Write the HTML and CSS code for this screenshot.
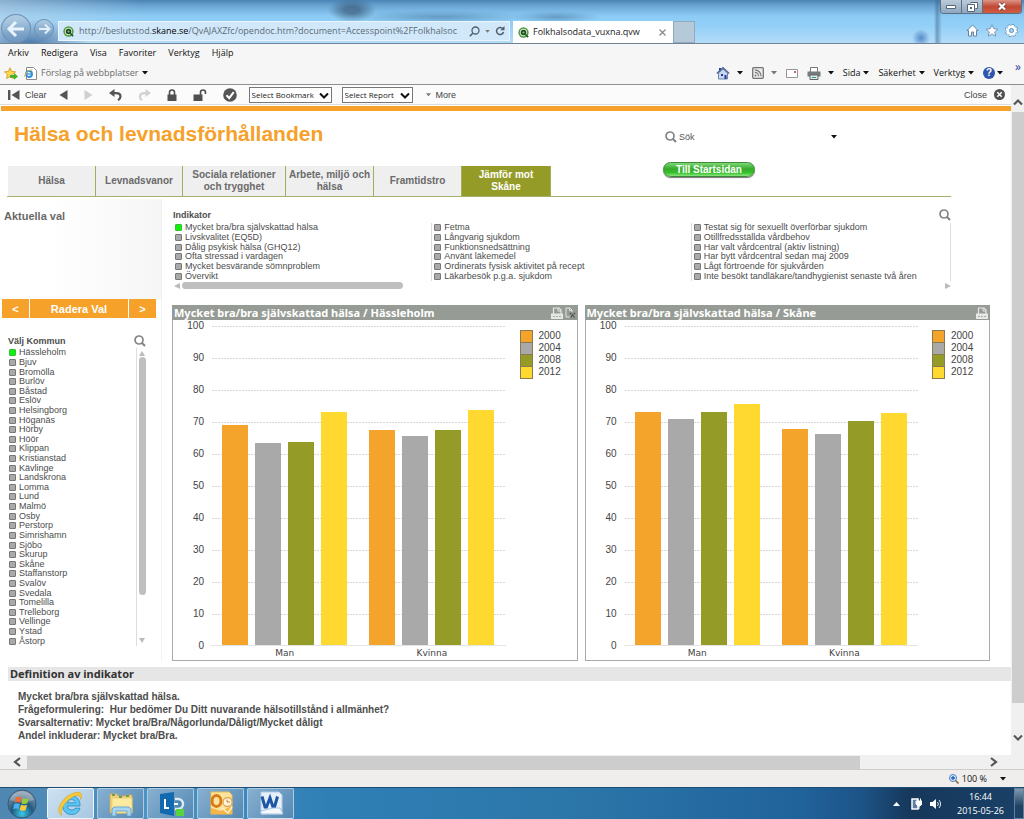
FILE: index.html
```html
<!DOCTYPE html>
<html lang="sv">
<head>
<meta charset="utf-8">
<title>Folkhalsodata_vuxna.qvw</title>
<link rel="stylesheet" href="styles.css">
</head>
<body>
<svg class="defs" width="0" height="0" aria-hidden="true">
  <defs>
    <symbol id="qlik" viewBox="0 0 12 12"><circle cx="6" cy="6" r="5.6" fill="#4d9b3c"/><circle cx="6" cy="6" r="4" fill="#d8ecd0"/><circle cx="6" cy="6" r="3" fill="#27432b"/><circle cx="6" cy="6" r="1.2" fill="#7fc96a"/><path d="M8 8l3 3" stroke="#27632b" stroke-width="2"/></symbol>
    <symbol id="mag" viewBox="0 0 12 12"><circle cx="5" cy="5" r="4" fill="none" stroke="#858585" stroke-width="1.7"/><path d="M7.8 7.8L11 11" stroke="#858585" stroke-width="2.2"/></symbol>
    <symbol id="down" viewBox="0 0 6 4"><path d="M0 0h6L3 3.6z" fill="currentColor"/></symbol>
    <symbol id="chev" viewBox="0 0 10 8"><path d="M1 1.5l4 4 4-4" fill="none" stroke="currentColor" stroke-width="2"/></symbol>
    <symbol id="printer" viewBox="0 0 12 12"><path d="M2.5 7V1h5.500l2 2v4" fill="none" stroke="#e6e8e5" stroke-width="1.2"/><path d="M7 1v3h3" fill="none" stroke="#e6e8e5"/><path d="M0 6.500h12V12H0z" fill="#e6e8e5"/><path d="M2 9.500h8" stroke="#a5aaa3" stroke-dasharray="2 1"/></symbol>
  </defs>
</svg>

<header class="titlebar">
  <div class="nav-buttons">
    <button class="round back" aria-label="Bakåt"><svg width="20" height="18" viewBox="0 0 20 18"><path d="M10 2L3 9l7 7M3 9h15" fill="none" stroke="#e9f3fb" stroke-width="3"/></svg></button>
    <button class="round forward" aria-label="Framåt"><svg width="13" height="12" viewBox="0 0 13 12"><path d="M7 1.500l4.500 4.500L7 10.500M11 6H1" fill="none" stroke="#e2eff9" stroke-width="2"/></svg></button>
  </div>
  <div class="address">
    <svg width="11" height="11"><use href="#qlik"/></svg>
    <div class="url" role="textbox" contenteditable="true" aria-label="Adress">http://beslutstod.<b>skane.se</b>/QvAJAXZfc/opendoc.htm?document=Accesspoint%2FFolkhalsoc</div>
    <svg width="11" height="11" viewBox="0 0 11 11"><circle cx="6.500" cy="4.500" r="3.500" fill="none" stroke="#51606c" stroke-width="1.300"/><path d="M4 7L.8 10.200" stroke="#51606c" stroke-width="1.600"/></svg>
    <svg class="muted" width="5" height="3"><use href="#down"/></svg>
    <svg width="10" height="10" viewBox="0 0 10 10"><path d="M8 2.800A3.600 3.600 0 1 0 8.600 6" fill="none" stroke="#51606c" stroke-width="1.500"/><path d="M9.500 0v4.200H5.300z" fill="#51606c"/></svg>
  </div>
  <div class="tab-strip">
    <div class="browser-tab"><svg width="11" height="11"><use href="#qlik"/></svg><span>Folkhalsodata_vuxna.qvw</span><button aria-label="Stäng flik"><svg width="7" height="7" viewBox="0 0 7 7"><path d="M.5.5l6 6M6.500.5l-6 6" stroke="#8b8b8b" stroke-width="1.300"/></svg></button></div>
    <button class="new-tab" aria-label="Ny flik"></button>
  </div>
  <div class="window-side">
    <div class="window-buttons">
      <button aria-label="Minimera"><svg width="10" height="4" viewBox="0 0 10 4"><path d="M.5.5h9v3h-9z" fill="#fff" stroke="#54677d"/></svg></button>
      <button aria-label="Återställ"><svg width="11" height="10" viewBox="0 0 11 10"><path d="M3.500.5h7v6h-2" fill="#fff" stroke="#54677d"/><path d="M.5 2.500h7v7h-7z" fill="#fff" stroke="#54677d"/><path d="M3 5h2v2H3z" fill="#54677d"/></svg></button>
      <button class="close" aria-label="Stäng"><svg width="10" height="9" viewBox="0 0 10 9"><path d="M2 1.500l6 6M8 1.500l-6 6" stroke="#6b3833" stroke-width="3.600"/><path d="M2 1.500l6 6M8 1.500l-6 6" stroke="#fff" stroke-width="2.200"/></svg></button>
    </div>
    <div class="tools">
      <button aria-label="Startsida"><svg width="13" height="13" viewBox="0 0 13 13"><path d="M1 6.500L6.500 1 12 6.500h-1.500V12h-3V8h-2v4h-3V6.500z" fill="#fff" stroke="#6883a0"/></svg></button>
      <button aria-label="Favoriter"><svg width="14" height="13" viewBox="0 0 13 13"><path d="M6.500.8l1.700 3.900 4.200.4-3.200 2.800 1 4.200-3.700-2.200-3.700 2.200 1-4.200L.6 5.100l4.200-.4z" fill="#fff" stroke="#6883a0" stroke-width=".8"/></svg></button>
      <button aria-label="Verktyg"><svg width="13" height="13" viewBox="0 0 13 13"><circle cx="6.500" cy="6.500" r="5" fill="none" stroke="#6883a0" stroke-width="3" stroke-dasharray="2.300 1.600"/><circle cx="6.500" cy="6.500" r="3.600" fill="none" stroke="#fff" stroke-width="2.200"/><circle cx="6.500" cy="6.500" r="5" fill="none" stroke="#fff" stroke-width="1.600" stroke-dasharray="2 1.900"/><circle cx="6.500" cy="6.500" r="2" fill="none" stroke="#6883a0" stroke-width=".8"/></svg></button>
    </div>
  </div>
</header>

<nav class="menu-bar">
  <button>Arkiv</button><button>Redigera</button><button>Visa</button><button>Favoriter</button><button>Verktyg</button><button>Hjälp</button>
</nav>
<div class="command-bar">
  <button class="add-fav" aria-label="Lägg till i favoriter"><svg width="14" height="13" viewBox="0 0 14 13"><path d="M6 .8l1.600 3.600 4 .5-3 2.600.8 4L6 9.600l-3.400 1.900.8-4L.5 4.900l4-.5z" fill="#ffd84d" stroke="#d79b1d" stroke-width=".9"/><path d="M6 8h4V6l4 3.500-4 3.300v-2H6z" fill="#43b02a"/></svg></button>
  <button class="suggested"><svg width="13" height="13" viewBox="0 0 13 13"><path d="M2.500.5h7l3 3v9h-10z" fill="#fff" stroke="#8a8a8a"/><circle cx="5" cy="7" r="3" fill="none" stroke="#2c8fd6" stroke-width="1.900"/><path d="M2.500 7H8" stroke="#2c8fd6" stroke-width="1.300"/><path d="M.5 10C1 6 5 2.500 8.500 3" fill="none" stroke="#e5b93b"/></svg>Förslag på webbplatser<svg class="black" width="6" height="4"><use href="#down"/></svg></button>
  <div class="commands">
    <button aria-label="Startsida"><svg width="14" height="14" viewBox="0 0 14 14"><path d="M3 2h2v4H3z" fill="#29369b"/><path d="M2.500 7v6h9V7L7 3z" fill="#c7d7ef" stroke="#6f86ae"/><path d="M.8 7.500L7 1.800l6.200 5.700" fill="none" stroke="#526b9c" stroke-width="1.500"/><path d="M5 8h2v2H5zM8.500 9h2v4h-2z" fill="#26399c"/></svg><svg width="6" height="4"><use href="#down"/></svg></button>
    <button aria-label="Flöden"><svg width="12" height="12" viewBox="0 0 12 12"><rect x=".7" y=".7" width="10.600" height="10.600" rx="1" fill="#ececec" stroke="#737373" stroke-width="1.300"/><circle cx="3.500" cy="8.500" r="1" fill="#777"/><path d="M2.800 5.400a3.800 3.800 0 0 1 3.800 3.800M2.800 2.900a6.300 6.300 0 0 1 6.300 6.300" fill="none" stroke="#777" stroke-width="1.200"/></svg><svg class="muted" width="6" height="4"><use href="#down"/></svg></button>
    <button aria-label="E-post"><svg width="12" height="9" viewBox="0 0 12 9"><path d="M.5.5h11v8H.5z" fill="#fff" stroke="#9a9494"/><path d="M8 2h2v2H8z" fill="#c96464"/></svg></button>
    <button aria-label="Skriv ut"><svg width="14" height="13" viewBox="0 0 14 13"><path d="M3.500 5V.5h7V5" fill="#fff" stroke="#777"/><path d="M.5 4.500h13v5H.5z" fill="#777b7b"/><path d="M3 8h8v4.500H3z" fill="#dce9e7" stroke="#666"/><path d="M5 10.500h4" stroke="#3b9b94"/></svg><svg width="6" height="4"><use href="#down"/></svg></button>
    <button>Sida<svg width="6" height="4"><use href="#down"/></svg></button>
    <button>Säkerhet<svg width="6" height="4"><use href="#down"/></svg></button>
    <button>Verktyg<svg width="6" height="4"><use href="#down"/></svg></button>
    <button class="help" aria-label="Hjälp"><span>?</span><svg width="6" height="4"><use href="#down"/></svg></button>
    <button class="overflow" aria-label="Fler kommandon">»</button>
  </div>
</div>

<div class="viewport">
  <div class="page">
    <div class="qv-bar">
      <button class="q-clear"><svg width="12" height="10" viewBox="0 0 12 10"><path d="M0 0h2.400v10H0zM11.500 0v10L3.500 5z" fill="#555"/></svg>Clear</button>
      <button aria-label="Back"><svg width="9" height="10" viewBox="0 0 9 10"><path d="M8.500 0v10L.5 5z" fill="#555"/></svg></button>
      <button aria-label="Forward"><svg width="9" height="10" viewBox="0 0 9 10"><path d="M.5 0v10l8-5z" fill="#cfcfcf"/></svg></button>
      <button aria-label="Undo"><svg width="13" height="12" viewBox="0 0 13 12"><path d="M3 4.200h4.500c5 0 5 5 1.500 7" fill="none" stroke="#555" stroke-width="2.200"/><path d="M5.500 0v8L0 4z" fill="#555"/></svg></button>
      <button aria-label="Redo"><svg width="13" height="12" viewBox="0 0 13 12"><path d="M10 4.200H6c-5 0-5 5-2 7" fill="none" stroke="#d2d2d2" stroke-width="2.200"/><path d="M7.500 0v8L13 4z" fill="#d2d2d2"/></svg></button>
      <button aria-label="Lock"><svg width="10" height="12" viewBox="0 0 10 12"><path d="M.5 5.500h9V12h-9z" fill="#4f4f4f"/><path d="M2.500 6V3.500a2.500 2.500 0 0 1 5 0V6" fill="none" stroke="#4f4f4f" stroke-width="1.600"/></svg></button>
      <button aria-label="Unlock"><svg width="14" height="12" viewBox="0 0 14 12"><path d="M.5 5.500h9V12h-9z" fill="#4f4f4f"/><path d="M7.500 6V3.500a2.500 2.500 0 0 1 5 0V5" fill="none" stroke="#4f4f4f" stroke-width="1.600"/></svg></button>
      <button aria-label="Apply"><svg width="14" height="14" viewBox="0 0 14 14"><circle cx="7" cy="7" r="6.800" fill="#555"/><path d="M3.500 7.200l2.700 2.900 4.500-6" fill="none" stroke="#fff" stroke-width="2"/></svg></button>
      <label class="pick bookmark"><select aria-label="Select Bookmark"><option>Select Bookmark</option></select><svg width="10" height="8"><use href="#chev"/></svg></label>
      <label class="pick report"><select aria-label="Select Report"><option>Select Report</option></select><svg width="10" height="8"><use href="#chev"/></svg></label>
      <button class="q-more"><svg class="muted" width="5" height="4"><use href="#down"/></svg>More</button>
      <button class="q-close">Close<svg width="11" height="11" viewBox="0 0 11 11"><circle cx="5.500" cy="5.500" r="5.500" fill="#505050"/><path d="M3.300 3.300l4.400 4.400M7.700 3.300L3.300 7.700" stroke="#fff" stroke-width="1.600"/></svg></button>
    </div>
    <div class="stripe"></div>

    <div class="page-head">
      <div class="head-left">
        <h1>Hälsa och levnadsförhållanden</h1>
        <nav class="tabs">
          <a href="#halsa">Hälsa</a><a href="#levnad">Levnadsvanor</a><a class="wide" href="#sociala">Sociala relationer och trygghet</a><a href="#arbete">Arbete, miljö och hälsa</a><a href="#framtid">Framtidstro</a><a class="active" href="#jamfor">Jämför mot Skåne</a>
        </nav>
      </div>
      <div class="head-right">
        <label class="search"><svg width="12" height="12"><use href="#mag"/></svg><input type="text" placeholder="Sök" aria-label="Sök"><svg class="black" width="6" height="4"><use href="#down"/></svg></label>
        <button class="start">Till Startsidan</button>
      </div>
    </div>

    <div class="columns">
      <aside class="sidebar">
        <h2>Aktuella val</h2>
        <div class="reset"><button aria-label="Föregående">&lt;</button><button>Radera Val</button><button aria-label="Nästa">&gt;</button></div>
        <div class="list-title"><h3>Välj Kommun</h3><button aria-label="Sök kommun"><svg width="12" height="12"><use href="#mag"/></svg></button></div>
        <div class="kommun">
          <div class="options">
            <label><input type="checkbox" checked>Hässleholm</label><label><input type="checkbox">Bjuv</label><label><input type="checkbox">Bromölla</label><label><input type="checkbox">Burlöv</label><label><input type="checkbox">Båstad</label><label><input type="checkbox">Eslöv</label><label><input type="checkbox">Helsingborg</label><label><input type="checkbox">Höganäs</label><label><input type="checkbox">Hörby</label><label><input type="checkbox">Höör</label><label><input type="checkbox">Klippan</label><label><input type="checkbox">Kristianstad</label><label><input type="checkbox">Kävlinge</label><label><input type="checkbox">Landskrona</label><label><input type="checkbox">Lomma</label><label><input type="checkbox">Lund</label><label><input type="checkbox">Malmö</label><label><input type="checkbox">Osby</label><label><input type="checkbox">Perstorp</label><label><input type="checkbox">Simrishamn</label><label><input type="checkbox">Sjöbo</label><label><input type="checkbox">Skurup</label><label><input type="checkbox">Skåne</label><label><input type="checkbox">Staffanstorp</label><label><input type="checkbox">Svalöv</label><label><input type="checkbox">Svedala</label><label><input type="checkbox">Tomelilla</label><label><input type="checkbox">Trelleborg</label><label><input type="checkbox">Vellinge</label><label><input type="checkbox">Ystad</label><label><input type="checkbox">Åstorp</label>
          </div>
          <div class="v-scroll"><svg width="6" height="5" viewBox="0 0 6 5"><path d="M0 5h6L3 0z" fill="#bbb"/></svg><div class="thumb"></div><svg width="6" height="5" viewBox="0 0 6 5"><path d="M0 0h6L3 5z" fill="#bbb"/></svg></div>
        </div>
      </aside>

      <main>
        <section class="indicator">
          <div class="list-title"><h3>Indikator</h3><button aria-label="Sök indikator"><svg width="12" height="12"><use href="#mag"/></svg></button></div>
          <div class="indicator-cols">
            <div class="options"><label><input type="checkbox" checked>Mycket bra/bra självskattad hälsa</label><label><input type="checkbox">Livskvalitet (EQ5D)</label><label><input type="checkbox">Dålig psykisk hälsa (GHQ12)</label><label><input type="checkbox">Ofta stressad i vardagen</label><label><input type="checkbox">Mycket besvärande sömnproblem</label><label><input type="checkbox">Övervikt</label></div>
            <div class="options"><label><input type="checkbox">Fetma</label><label><input type="checkbox">Långvarig sjukdom</label><label><input type="checkbox">Funktionsnedsättning</label><label><input type="checkbox">Använt läkemedel</label><label><input type="checkbox">Ordinerats fysisk aktivitet på recept</label><label><input type="checkbox">Läkarbesök p.g.a. sjukdom</label></div>
            <div class="options"><label><input type="checkbox">Testat sig för sexuellt överförbar sjukdom</label><label><input type="checkbox">Otillfredsställda vårdbehov</label><label><input type="checkbox">Har valt vårdcentral (aktiv listning)</label><label><input type="checkbox">Har bytt vårdcentral sedan maj 2009</label><label><input type="checkbox">Lågt förtroende för sjukvården</label><label><input type="checkbox">Inte besökt tandläkare/tandhygienist senaste två åren</label></div>
          </div>
          <div class="h-scroll"><svg width="6" height="6" viewBox="0 0 6 6"><path d="M6 0v6L0 3z" fill="#bbb"/></svg><div class="track"><div class="thumb"></div></div><svg width="6" height="6" viewBox="0 0 6 6"><path d="M0 0v6l6-3z" fill="#bbb"/></svg></div>
        </section>

        <div class="charts">
          <section class="chart">
            <header><h3>Mycket bra/bra självskattad hälsa / Hässleholm</h3><button aria-label="Skriv ut"><svg width="12" height="12"><use href="#printer"/></svg></button><button aria-label="Exportera"><svg width="11" height="12" viewBox="0 0 11 12"><path d="M5 10H1V1h4l2 2v2M4.500 1v2.500H7" fill="none" stroke="#dfe2de"/><path d="M5 6l5 5M10 6l-5 5" stroke="#4b504b" stroke-width="1.300" stroke-dasharray="1.500 .7"/></svg></button></header>
            <div class="chart-body">
              <div class="y-axis"><span>100</span><span>90</span><span>80</span><span>70</span><span>60</span><span>50</span><span>40</span><span>30</span><span>20</span><span>10</span><span>0</span></div>
              <div class="plot-col">
                <div class="plot">
                  <div class="group"><i class="c0" style="height:69%"></i><i class="c1" style="height:63.3%"></i><i class="c2" style="height:63.6%"></i><i class="c3" style="height:73%"></i></div>
                  <div class="group"><i class="c0" style="height:67.4%"></i><i class="c1" style="height:65.4%"></i><i class="c2" style="height:67.4%"></i><i class="c3" style="height:73.6%"></i></div>
                </div>
                <div class="x-axis"><span>Man</span><span>Kvinna</span></div>
              </div>
              <ul class="legend"><li><i class="c0"></i>2000</li><li><i class="c1"></i>2004</li><li><i class="c2"></i>2008</li><li><i class="c3"></i>2012</li></ul>
            </div>
          </section>
          <section class="chart">
            <header><h3>Mycket bra/bra självskattad hälsa / Skåne</h3><button aria-label="Skriv ut"><svg width="12" height="12"><use href="#printer"/></svg></button></header>
            <div class="chart-body">
              <div class="y-axis"><span>100</span><span>90</span><span>80</span><span>70</span><span>60</span><span>50</span><span>40</span><span>30</span><span>20</span><span>10</span><span>0</span></div>
              <div class="plot-col">
                <div class="plot">
                  <div class="group"><i class="c0" style="height:73%"></i><i class="c1" style="height:70.9%"></i><i class="c2" style="height:73%"></i><i class="c3" style="height:75.6%"></i></div>
                  <div class="group"><i class="c0" style="height:67.6%"></i><i class="c1" style="height:66.1%"></i><i class="c2" style="height:70.2%"></i><i class="c3" style="height:72.6%"></i></div>
                </div>
                <div class="x-axis"><span>Man</span><span>Kvinna</span></div>
              </div>
              <ul class="legend"><li><i class="c0"></i>2000</li><li><i class="c1"></i>2004</li><li><i class="c2"></i>2008</li><li><i class="c3"></i>2012</li></ul>
            </div>
          </section>
        </div>
      </main>
    </div>

    <section class="definition">
      <h3>Definition av indikator</h3>
      <div class="def-text">
        <p>Mycket bra/bra självskattad hälsa.</p>
        <p>Frågeformulering:&nbsp; Hur bedömer Du Ditt nuvarande hälsotillstånd i allmänhet?</p>
        <p>Svarsalternativ: Mycket bra/Bra/Någorlunda/Dåligt/Mycket dåligt</p>
        <p>Andel inkluderar: Mycket bra/Bra.</p>
      </div>
    </section>

    <div class="page-h-scroll"><svg width="8" height="10" viewBox="0 0 8 10"><path d="M7 1L2 5l5 4" fill="none" stroke="#555" stroke-width="2.200"/></svg><div class="track"><div class="thumb"></div></div><svg width="8" height="10" viewBox="0 0 8 10"><path d="M1 1l5 4-5 4" fill="none" stroke="#555" stroke-width="2.200"/></svg></div>
  </div>
  <div class="page-v-scroll"><svg width="10" height="8" viewBox="0 0 10 8"><path d="M1 6.500l4-4 4 4" fill="none" stroke="#555" stroke-width="2.200"/></svg><div class="thumb"></div><svg width="10" height="8"><use href="#chev"/></svg></div>
</div>

<footer class="status-bar"><button><svg width="10" height="10" viewBox="0 0 10 10"><circle cx="4" cy="4" r="3.500" fill="#d8ebfb" stroke="#3f7fc4"/><path d="M4 2v4M2 4h4" stroke="#1f5fb4" stroke-width="1.300"/><path d="M6.500 6.500l3 3" stroke="#8a6a3a" stroke-width="1.600"/></svg>100 %<svg class="zoom-arrow" width="6" height="4"><use href="#down"/></svg></button></footer>

<div class="taskbar">
  <button class="start-orb" aria-label="Start"><svg width="30" height="30" viewBox="0 0 30 30"><defs><radialGradient id="orb" cx="50%" cy="85%" r="75%"><stop offset="0" stop-color="#3cc8e6"/><stop offset=".5" stop-color="#1f5a80"/><stop offset="1" stop-color="#7f93a5"/></radialGradient></defs><circle cx="15" cy="15" r="14" fill="url(#orb)" stroke="#355a78"/><path d="M3 11a12.500 12.500 0 0 1 24 0c-7 3-17 3-24 0z" fill="#fff" opacity=".25"/><path d="M9 8.500c2-1.200 4-1.100 5.500 0l-1.300 5.200c-1.700-1-3.500-1-5.500 0z" fill="#f06a31"/><path d="M15.700 9.200c2 1 4 1 6-.2l-1.300 5.300c-2 1.100-4 1-6 .1z" fill="#9acb3b"/><path d="M7.300 15c2-1 4-1 5.600 0l-1.300 5.200c-1.800-1-3.700-1-5.600 0z" fill="#4eb0ea"/><path d="M14 15.700c2 1 4 1 6 0l-1.300 5.300c-2 1-4 1-6 0z" fill="#fbcb3d"/></svg></button>
  <button class="task current" aria-label="Internet Explorer"><svg width="28" height="26" viewBox="0 0 28 26"><path d="M23 15H10.500c.3 2.800 2 4 4.300 4 1.700 0 2.800-.6 3.600-1.800H23c-1.400 4.400-4.500 6.300-8.400 6.300-5.300 0-9-3.800-9-9.300S9.500 5 14.700 5c5.300 0 8.600 3.800 8.300 10zM10.600 11.800h7.600c-.3-2-1.700-3.200-3.800-3.200-2 0-3.400 1.200-3.800 3.200z" fill="#5cc4f1" stroke="#2489c6" stroke-width=".8"/><path d="M4.500 24.500C-2.500 20 5 6.500 15.500 2.500c7.500-2.800 11-.3 8 6 .3-4-2.300-5-6.500-3.200C9.500 8.500 2.500 18 4.500 24.500z" fill="#f8ca35" stroke="#d69c18" stroke-width=".5"/></svg></button>
  <button class="task" aria-label="Utforskaren"><svg width="28" height="24" viewBox="0 0 28 24"><path d="M3 2h7l1 2h7l1-1h6v18H3z" fill="#f0d27a" stroke="#d0aa50" stroke-width=".8"/><path d="M5 6h20v15H5z" fill="#fbeaa0" stroke="#e8cf75"/><path d="M5 3h3M12 5h3M19 4h3" stroke="#4d8b50" stroke-width="1.500"/><path d="M5 24v-7l2-2h15l2 2v7h-4v-5H9v5z" fill="#a7d5f0" stroke="#6ba7cf"/></svg></button>
  <button class="task" aria-label="Lync"><svg width="28" height="26" viewBox="0 0 28 26"><path d="M3 3l14-2v24L3 22z" fill="#1169b0"/><path d="M8 8v9h4" fill="none" stroke="#fff" stroke-width="2"/><path d="M18 8h3a5 5 0 0 1 0 10h-3" fill="#4b86b5" stroke="#dceaf5" stroke-width="2.400"/><path d="M17 13h4" stroke="#fff" stroke-width="2"/><path d="M19 18h8v7h-8z" fill="#55d43f"/></svg></button>
  <button class="task" aria-label="Outlook"><svg width="26" height="25" viewBox="0 0 26 25"><path d="M3 1h18l3 3v19H3z" fill="#fbe3a0" stroke="#f3bd55"/><path d="M3 17l10 3 11-5v8H3z" fill="#f6b647"/><ellipse cx="8.500" cy="10" rx="4.500" ry="5.500" fill="none" stroke="#d97c14" stroke-width="3"/><circle cx="19.500" cy="11" r="4.500" fill="#fff5e2" stroke="#e5a551" stroke-width="1.300"/><path d="M19 8.500V11h3" fill="none" stroke="#cf7a16"/><path d="M14 17l6 5 4-6" fill="none" stroke="#fff2d0" stroke-width="1.500"/></svg></button>
  <button class="task" aria-label="Word"><svg width="26" height="25" viewBox="0 0 26 25"><path d="M3 1h18l3 3v19H3z" fill="#e6f0fa" stroke="#b3cce6"/><path d="M4 5.500l3 10.500h1.500L12 7l3 9h1.500l3-10.500" fill="none" stroke="#1f55a5" stroke-width="3"/><path d="M3 20l12-3h7l3 6H3z" fill="#f5f9fd" stroke="#a9c5e1"/></svg></button>
  <div class="tray">
    <svg width="7" height="4" viewBox="0 0 7 4"><path d="M0 4h7L3.500 0z" fill="#fff"/></svg>
    <svg width="11" height="13" viewBox="0 0 11 13"><path d="M1 2h6v10H1z" fill="#5c7e9d" stroke="#fff" stroke-width="1.500"/><path d="M5 4h6v3l-2 2H7L5 7zM8 9v3M6.500 1.500V4M9.500 1.500V4" fill="#fff" stroke="#fff"/></svg>
    <svg width="12" height="12" viewBox="0 0 12 12"><path d="M0 4h2.500L6 1v10L2.500 8H0z" fill="#fff"/><path d="M7.500 4a3 3 0 0 1 0 4M9 2a6 6 0 0 1 0 8" fill="none" stroke="#dfeaf3"/></svg>
    <div class="clock"><time>16:44</time><time>2015-05-26</time></div>
  </div>
  <button class="show-desktop" aria-label="Visa skrivbordet"></button>
</div>
</body>
</html>
```
FILE: styles.css
```css
* { box-sizing: border-box; }
html, body { margin: 0; }
body {
  min-height: 100vh;
  display: flex;
  flex-direction: column;
  background: #fff;
  font-family: "Liberation Sans", Arial, sans-serif;
  font-size: 10px;
  color: #4d4d4d;
}
svg { display: block; flex: none; }
.defs { position: absolute; }
button { margin: 0; padding: 0; border: 0; background: none; font: inherit; color: inherit; display: flex; align-items: center; justify-content: center; }
h1, h2, h3, p, ul { margin: 0; padding: 0; }
i { display: block; }
.black { color: #111; }
.muted { color: #777; }

/* Browser frame */
.titlebar {
  height: 44px;
  display: flex;
  align-items: flex-end;
  border-bottom: 1px solid #6f8494;
  background:
    radial-gradient(ellipse 24px 12px at 352px 10px, #3d5f80bb 30%, transparent),
    radial-gradient(ellipse 90px 7px at 440px 17px, #4f83adaa, transparent),
    radial-gradient(ellipse 44px 6px at 556px 17px, #4f83adaa, transparent),
    radial-gradient(ellipse 9px 9px at 921px 38px, #3f78b8cc, transparent),
    radial-gradient(ellipse 60px 24px at 30px 44px, #4a78aa, transparent),
    linear-gradient(90deg, transparent 934px, #3e668a88 937px, transparent 942px),
    linear-gradient(90deg, #c3d6e688 0, #7bbbe900 14%),
    linear-gradient(#4a83b4, #6ba6d4 6px, #8ccbf5 16px, #93d0f8 26px, #b4dcf8 43px);
}
.nav-buttons { display: flex; align-items: center; gap: 3px; padding: 0 4px 0 1px; }
.round { border-radius: 50%; border: 1px solid #6f8fb0; background: linear-gradient(#b4c8dc99, #8fadcc99 50%, #6f99c4); }
.back { width: 30px; height: 29px; }
.forward { width: 20px; height: 20px; }
.address {
  flex: 1;
  height: 20px;
  min-width: 0;
  margin-bottom: 2px;
  padding: 0 4px;
  display: flex;
  align-items: center;
  gap: 5px;
  border: 1px solid #eaf6ff;
  background: #d0e8fa;
}
.url { flex: 1; min-width: 0; overflow: hidden; white-space: nowrap; font: 9px/18px "Open Sans", sans-serif; color: #5c6b78; }
.url b { font-weight: 400; color: #000; }
.tab-strip { display: flex; margin-left: 3px; width: 182px; flex: none; }
.browser-tab { flex: 1; height: 22px; display: flex; align-items: center; gap: 4px; padding: 0 7px 0 5px; background: #fff; color: #222; font: 9px/20px "Open Sans", sans-serif; }
.browser-tab button { margin-left: auto; }
.new-tab { width: 22px; height: 22px; background: #b5c9d9; border: 1px solid #93aabd; }
.window-side { flex: none; width: 329px; height: 43px; display: flex; flex-direction: column; justify-content: space-between; align-items: flex-end; }
.window-buttons { display: flex; height: 14px; margin-right: 2px; border: 1px solid #5d6f82; border-top: 0; border-radius: 0 0 4px 4px; overflow: hidden; }
.window-buttons button { width: 21px; background: linear-gradient(#bccbda, #8ea7bf); border-right: 1px solid #5d6f82; }
.window-buttons .close { width: 38px; border: 0; background: linear-gradient(#dc9486, #c04a36 50%, #cf5c40); }
.tools { display: flex; gap: 6px; padding: 0 6px 6px 0; }

.menu-bar { display: flex; gap: 12px; height: 18px; padding-left: 8px; background: #f6f6f6; color: #111; font: 9px/18px "Open Sans", sans-serif; }
.command-bar { display: flex; align-items: center; height: 23px; padding: 0 3px 0 4px; background: #f6f6f6; border-bottom: 1px solid #8f8f8f; font: 9px/20px "Open Sans", sans-serif; color: #111; }
.suggested { margin-left: 6px; gap: 4px; color: #6b6b6b; }
.commands { display: flex; align-items: center; margin-left: auto; gap: 9px; }
.commands button { gap: 3px; }
.commands button:nth-child(-n+4) { gap: 7px; }
.commands button.help { gap: 2px; }
.help span { width: 12px; height: 12px; border-radius: 50%; background: #3055ac; color: #fff; font: bold 10px/12px "Liberation Sans", sans-serif; text-align: center; }
.commands .overflow { align-self: flex-start; margin-left: 3px; color: #2c3c9c; line-height: 8px; font-size: 12px; }

/* Scrollable document */
.viewport { flex: 1; display: flex; }
.page { flex: 1; min-width: 0; display: flex; flex-direction: column; }
.qv-bar { display: flex; align-items: center; height: 20px; padding: 0 6px 0 8px; gap: 16px; background: #fbfbfb; border-bottom: 1px solid #ddd; color: #444; font-size: 9px; }
.q-clear, .q-more, .q-close { gap: 5px; }
.q-clear { margin-right: -4px; }
.q-more { margin-left: -3px; }
.q-close { margin-left: auto; gap: 7px; }
.pick { position: relative; display: block; margin-left: -4px; }
.pick select { appearance: none; display: block; width: 100%; height: 16px; padding: 0 0 0 2px; border: 1px solid #777; border-radius: 0; background: #fff; color: #222; font: 8px "Open Sans", sans-serif; }
.pick svg { position: absolute; right: 3px; top: 5px; color: #111; pointer-events: none; }
.bookmark { width: 83px; }
.report { width: 71px; margin-left: -6px; }
.stripe { height: 5px; margin: 1px 0 0 1px; background: #f5a12a; }

.page-head { display: flex; margin: 0 60px 0 7px; height: 86px; border-bottom: 1px solid #a5b26d; }
.head-left { width: 544px; display: flex; flex-direction: column; justify-content: space-between; }
h1 { padding: 10px 0 0 7px; font-size: 21px; line-height: 26px; color: #f5a12a; }
.tabs { display: grid; grid-template-columns: 88fr 87fr 103fr 88fr 88fr 89fr; height: 30px; padding-left: 1px; }
.tabs a { display: flex; align-items: center; justify-content: center; text-align: center; background: #efefef; border-right: 1px solid #a3ad5c; color: #6a6a6a; font-weight: bold; line-height: 12px; text-decoration: none; }
.tabs a.wide { padding: 0 8px; }
.tabs a.active { background: #949c27; color: #fff; padding: 0 12px; }
.head-right { margin-left: 112px; padding-top: 18px; display: flex; flex-direction: column; align-items: flex-start; gap: 17px; }
.search { display: flex; align-items: center; gap: 2px; width: 174px; padding-left: 2px; height: 16px; }
.search input { flex: 1; min-width: 0; border: 0; padding: 0; background: none; font: 9px "Liberation Sans", sans-serif; }
.search input::placeholder { color: #555; opacity: 1; }
.start { width: 92px; height: 15px; border: 1px solid #3c8a35; border-radius: 8px; background: linear-gradient(#7fd877, #35ab2b 45%, #37c02b 75%, #8be67f); box-shadow: 0 1px 1px #777; color: #fff; font-weight: bold; }

.columns { display: flex; gap: 10px; padding-top: 2px; }
.sidebar { width: 162px; flex: none; padding-top: 11px; background: linear-gradient(90deg, #fff 30%, #f6f6f6) no-repeat; background-size: 100% 100px; border-right: 1px solid #f2f2f2; }
h2 { padding-left: 4px; font-size: 11px; line-height: 12px; color: #6a6a6a; }
.reset { display: flex; gap: 1px; margin: 77px 5px 0 2px; height: 19px; }
.reset button { width: 27px; background: #f5a12a; color: #fff; font-weight: bold; font-size: 11px; }
.reset button:nth-child(2) { flex: 1; }
.list-title { display: flex; justify-content: space-between; align-items: center; height: 12px; }
.list-title h3 { font-size: 9px; line-height: 12px; }
.sidebar .list-title { margin: 17px 15px 0 8px; }
.kommun { display: flex; justify-content: space-between; margin: 1px 14px 0 9px; }
.options { display: grid; grid-auto-rows: 1fr; }
.kommun .options { height: 298px; }
.options label { display: flex; align-items: center; gap: 3px; min-height: 0; font-size: 9px; line-height: 9px; white-space: nowrap; }
.options input { appearance: none; margin: 0; width: 7px; height: 7px; border: 1px solid #777; border-radius: 1px; background: #aaa; flex: none; }
.options input:checked { background: #0df20d; border-color: #3bbf3b; }
.v-scroll { width: 11px; padding: 3px 0; display: flex; flex-direction: column; align-items: center; border-left: 1px solid #ddd; }
.thumb { background: #bfbfbf; border-radius: 4px; }
.v-scroll .thumb { width: 7px; height: 238px; margin: 1px 0 auto; }

main { flex: 1; min-width: 0; padding-right: 21px; }
.indicator { margin: 10px 39px 0 1px; }
.indicator-cols { display: grid; grid-template-columns: repeat(3, 1fr); height: 58px; margin-top: 2px; }
.indicator-cols .options { padding-left: 2px; border-right: 1px solid #ddd; }
.h-scroll { display: flex; align-items: center; height: 9px; margin-left: 1px; gap: 2px; }
.track { flex: 1; }
.h-scroll .thumb { width: 29%; height: 7px; }
.charts { display: grid; grid-template-columns: 1fr 1fr; gap: 7px; margin-top: 15px; }
.chart { border: 1px solid #aaa; border-top: 0; }
.chart header { display: flex; align-items: center; gap: 2px; height: 15px; margin: 0 -1px; padding: 0 2px; background: #969c95; color: #fff; }
.chart h3 { flex: 1; font: bold 11px/15px "Noto Sans", sans-serif; white-space: nowrap; }
.chart-body { display: flex; height: 340px; padding-top: 6px; color: #444; }
.y-axis { width: 31px; height: 332px; margin-top: -6px; display: flex; flex-direction: column; justify-content: space-between; text-align: right; line-height: 12px; }
.plot-col { flex: 1; margin-left: 7px; }
.plot {
  height: 320px;
  display: flex;
  border-bottom: 1px solid #e4e4e4;
  background:
    repeating-linear-gradient(90deg, #fff 0 1px, transparent 1px 3px),
    repeating-linear-gradient(#d8d8d8 0 1px, transparent 1px 32px);
}
.group { flex: 1; display: flex; align-items: flex-end; justify-content: space-between; padding: 0 11px; }
.group i { width: 26px; }
.c0 { background: #f5a42b; }
.c1 { background: #a9a9a9; }
.c2 { background: #949c27; }
.c3 { background: #ffd92f; }
.x-axis { display: flex; text-align: center; font: 9px/14px "DejaVu Sans", Verdana, sans-serif; }
.x-axis span { flex: 1; }
.legend { width: 71px; padding: 4px 0 0 14px; list-style: none; }
.legend li { display: flex; align-items: center; gap: 6px; height: 12px; line-height: 12px; }
.legend i { width: 13px; height: 13px; border: 1px solid #8a7a50; }

.definition { padding: 6px 0 0 8px; flex: 1; }
.definition h3 { height: 14px; padding-left: 2px; background: #e6e6e6; color: #333; font: bold 11px/14px "Noto Sans", sans-serif; }
.def-text { padding: 9px 10px; font-weight: bold; line-height: 13px; }
.page-h-scroll { display: flex; align-items: center; height: 14px; padding: 0 13px; gap: 6px; background: #f0f0f0; }
.page-h-scroll .track, .page-h-scroll .thumb { height: 13px; }
.page-h-scroll .thumb { width: 87%; background: #cdcdcd; border-radius: 0; }
.page-v-scroll { width: 13px; flex: none; display: flex; flex-direction: column; align-items: center; justify-content: space-between; padding: 13px 0 27px; background: #f0f0f0; color: #555; }
.page-v-scroll .thumb { width: 12px; flex: 1; margin: 6px 0 31px; background: #cdcdcd; border-radius: 0; }

.status-bar { display: flex; justify-content: flex-end; height: 18px; padding-right: 18px; background: #f0eeed; border-top: 1px solid #ccc; color: #111; font: 9px/16px "Open Sans", sans-serif; }
.status-bar button { gap: 3px; }
.zoom-arrow { margin-left: 10px; }
.taskbar { display: flex; height: 32px; gap: 3px; border-top: 1px solid #1c4d73; background: linear-gradient(90deg, #4f87b2, #4c93c3 15%, #2f7fb5 32%, #2c77aa 55%, #20639b 78%, #1d5488 84%, #16375a 89%, #1a4168); }
.start-orb { width: 44px; }
.task { width: 47px; border: 1px solid #a9cbe4; border-bottom-color: #cde2f2; border-radius: 2px; background: linear-gradient(135deg, #87b0d0, #5589b3); overflow: hidden; }
.task.current { background: linear-gradient(135deg, #cfe1f0, #a7c8e2); border-color: #eef6fc; }
.tray { margin-left: auto; display: flex; align-items: center; gap: 11px; color: #fff; font: 9px/14px "Open Sans", sans-serif; }
.tray svg:nth-child(3) { margin-left: -3px; }
.clock { display: flex; flex-direction: column; align-items: center; margin: 0 7px 0 4px; }
.show-desktop { width: 10px; border: 1px solid #5f7f9c; background: linear-gradient(#7f98ae, #1f4264 60%); }
```
